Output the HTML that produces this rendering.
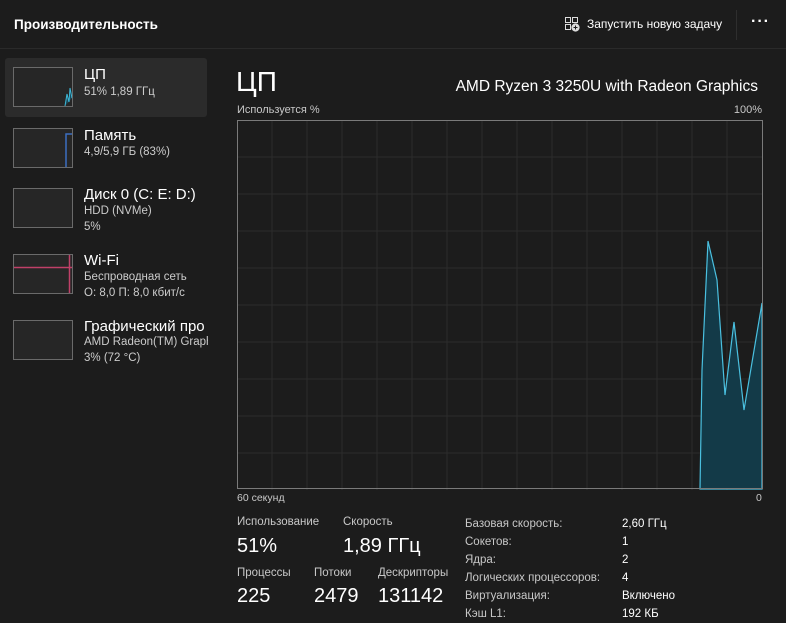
<!DOCTYPE html>
<html><head><meta charset="utf-8"><style>
body{margin:0;width:786px;height:619px;background:#1c1c1c;color:#fff;font-family:"Liberation Sans","Noto Sans CJK SC",sans-serif;position:relative;overflow:hidden}
.a{position:absolute;white-space:nowrap}
.th{position:absolute;left:13px;width:58px;height:38px;border:1px solid #6a6a6a;background:#262626}
.t1{font-size:15px;color:#fff}
.t2{font-size:11.5px;color:#ccc}
.lab{font-size:11.5px;color:#c8c8c8}
.big{font-size:20px;color:#fff}
</style></head><body>
<div class="a" style="left:0;top:0;width:786px;height:48px;background:#1c1c1c;border-bottom:1px solid #2a2a2a"></div>
<div class="a" style="left:14px;top:17px;font-size:13.5px;font-weight:bold">Производительность</div>
<svg class="a" style="left:564px;top:16px" width="16" height="16" viewBox="0 0 16 16" fill="none" stroke="#ddd" stroke-width="1"><rect x="1.5" y="1.5" width="5" height="5"/><rect x="8.5" y="1.5" width="5" height="5"/><rect x="1.5" y="8.5" width="5" height="5"/><circle cx="11.5" cy="11.5" r="3.6" fill="#ddd"/><path d="M11.5 9.5v4M9.5 11.5h4" stroke="#1c1c1c"/></svg>
<div class="a" style="left:587px;top:17px;font-size:12px">Запустить новую задачу</div>
<div class="a" style="left:736px;top:10px;width:1px;height:30px;background:#2e2e2e"></div>
<div class="a" style="left:751px;top:13px;font-size:16px;font-weight:bold;letter-spacing:1px">···</div>

<div class="a" style="left:5px;top:58px;width:202px;height:59px;background:#2b2b2b;border-radius:3px"></div>
<div class="th" style="top:67px"><svg width="58" height="38"><path d="M51 38 L53 26 L55 34 L56 20 L58 30" stroke="#3cb8d8" fill="#1c4a5a"/></svg></div>
<div class="a t1" style="left:84px;top:66px">ЦП</div>
<div class="a t2" style="left:84px;top:86px">51% 1,89 ГГц</div>

<div class="th" style="top:128px"><svg width="58" height="38"><path d="M52 38 V5 H58" stroke="#3b6ec0" fill="none" stroke-width="1.5"/></svg></div>
<div class="a t1" style="left:84px;top:127px">Память</div>
<div class="a t2" style="left:84px;top:146px">4,9/5,9 ГБ (83%)</div>

<div class="th" style="top:188px"></div>
<div class="a t1" style="left:84px;top:186px">Диск 0 (C: E: D:)</div>
<div class="a t2" style="left:84px;top:205px">HDD (NVMe)</div>
<div class="a t2" style="left:84px;top:221px">5%</div>

<div class="th" style="top:254px"><svg width="58" height="38"><path d="M0 12.5 H58 M55.5 0 V38" stroke="#c04068" fill="none" stroke-width="1.5"/></svg></div>
<div class="a t1" style="left:84px;top:252px">Wi-Fi</div>
<div class="a t2" style="left:84px;top:271px">Беспроводная сеть</div>
<div class="a t2" style="left:84px;top:287px">О: 8,0 П: 8,0 кбит/с</div>

<div class="th" style="top:320px"></div>
<div class="a t1" style="left:84px;top:318px">Графический про</div>
<div class="a t2" style="left:84px;top:336px;width:124px;overflow:hidden">AMD Radeon(TM) Graphics</div>
<div class="a t2" style="left:84px;top:352px">3% (72 °C)</div>

<div class="a" style="left:236px;top:66px;font-size:28px">ЦП</div>
<div class="a" style="right:28px;top:78px;font-size:15.5px">AMD Ryzen 3 3250U with Radeon Graphics</div>
<div class="a lab" style="left:237px;top:104px;font-size:11px">Используется %</div>
<div class="a lab" style="right:24px;top:104px;font-size:11px">100%</div>
<svg class="a" style="left:237px;top:120px" width="526" height="370">
<g stroke="#2c2c2c" stroke-width="1">
<path d="M0 37H526M0 74H526M0 111H526M0 148H526M0 185H526M0 222H526M0 259H526M0 296H526M0 333H526"/>
<path d="M35 0V370M70 0V370M105 0V370M140 0V370M175 0V370M210 0V370M245 0V370M280 0V370M315 0V370M350 0V370M385 0V370M420 0V370M455 0V370M490 0V370"/>
</g>
<path d="M463 369 L465 250 L471 121 L480 160 L488 275 L497 202 L507 290 L525 183 V369 Z" fill="#133a48" stroke="#4ac0e0" stroke-width="1.2"/>
<rect x="0.5" y="0.5" width="525" height="368" fill="none" stroke="#7a7a7a"/>
</svg>
<div class="a lab" style="left:237px;top:492px;font-size:10.5px">60 секунд</div>
<div class="a lab" style="left:756px;top:492px;font-size:10.5px">0</div>

<div class="a lab" style="left:237px;top:516px">Использование</div>
<div class="a lab" style="left:343px;top:516px">Скорость</div>
<div class="a big" style="left:237px;top:535px">51%</div>
<div class="a big" style="left:343px;top:535px">1,89 ГГц</div>
<div class="a lab" style="left:237px;top:567px">Процессы</div>
<div class="a lab" style="left:314px;top:567px">Потоки</div>
<div class="a lab" style="left:378px;top:567px">Дескрипторы</div>
<div class="a big" style="left:237px;top:585px">225</div>
<div class="a big" style="left:314px;top:585px">2479</div>
<div class="a big" style="left:378px;top:585px">131142</div>

<div class="a lab" style="left:465px;top:516px;line-height:17.9px">Базовая скорость:<br>Сокетов:<br>Ядра:<br>Логических процессоров:<br>Виртуализация:<br>Кэш L1:</div>
<div class="a" style="left:622px;top:516px;line-height:17.9px;font-size:11.5px">2,60 ГГц<br>1<br>2<br>4<br>Включено<br>192 КБ</div>
</body></html>
